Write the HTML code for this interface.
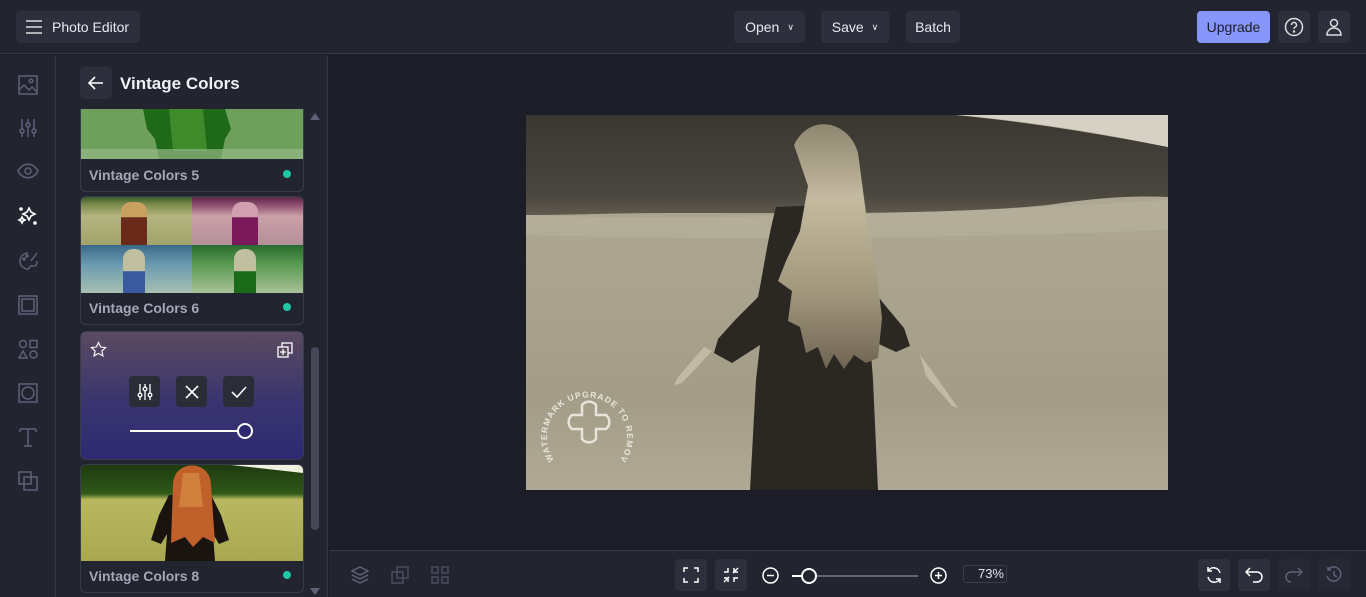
<!DOCTYPE html>
<html><head><style>
*{box-sizing:border-box;margin:0;padding:0}
body{width:1366px;height:597px;overflow:hidden;background:#1c1d27;font-family:"Liberation Sans",sans-serif;color:#e6e7ee;position:relative}
.top{position:absolute;left:0;top:0;width:1366px;height:54px;background:#22242f;border-bottom:1px solid #343747}
.btn{position:absolute;background:#2d303c;border-radius:4px;font-size:14px;color:#e8e9f0;display:flex;align-items:center;justify-content:center}
.rail{position:absolute;left:0;top:55px;width:56px;height:542px;background:#22242f;border-right:1px solid #343747}
.panel{position:absolute;left:56px;top:55px;width:272px;height:542px;background:#22242f;border-right:1px solid #343747}
.card{position:absolute;left:24px;width:224px;border:1px solid #393c4b;border-radius:6px;overflow:hidden;background:#22242f}
.card .lbl{position:absolute;left:8px;bottom:8px;font-size:14px;font-weight:bold;color:#a5a7b8}
.card .dot{position:absolute;right:12px;bottom:13px;width:8px;height:8px;border-radius:50%;background:#1fc7a6}
.bottom{position:absolute;left:329px;top:550px;width:1037px;height:47px;background:#22242f;border-top:1px solid #343747}
.ic{position:absolute;stroke:#5e6178;fill:none;stroke-width:1.5}
</style></head><body>
<div class="top">
 <div class="btn" style="left:16px;top:11px;width:124px;height:32px;justify-content:flex-start;padding-left:10px">
  <svg width="16" height="14" viewBox="0 0 16 14" stroke="#ddd" stroke-width="1.6"><path d="M0 1h16M0 7h16M0 13h16"/></svg>
  <span style="margin-left:10px">Photo Editor</span></div>
 <div class="btn" style="left:734px;top:11px;width:71px;height:32px">Open <span style="font-size:9px;margin-left:8px">&#x2228;</span></div>
 <div class="btn" style="left:821px;top:11px;width:68px;height:32px">Save <span style="font-size:9px;margin-left:8px">&#x2228;</span></div>
 <div class="btn" style="left:906px;top:11px;width:54px;height:32px">Batch</div>
 <div class="btn" style="left:1197px;top:11px;width:73px;height:32px;background:#8796fa;color:#1b1d2a">Upgrade</div>
 <div class="btn" style="left:1278px;top:11px;width:32px;height:32px"><svg width="20" height="20" viewBox="0 0 20 20" fill="none" stroke="#ddd" stroke-width="1.5"><circle cx="10" cy="10" r="8.5"/><path d="M7.5 8a2.5 2.5 0 1 1 3.3 2.3c-.6.3-.8.7-.8 1.4"/><circle cx="10" cy="14.5" r=".5"/></svg></div>
 <div class="btn" style="left:1318px;top:11px;width:32px;height:32px"><svg width="18" height="20" viewBox="0 0 18 20" fill="none" stroke="#ddd" stroke-width="1.5"><circle cx="9" cy="6" r="3.5"/><path d="M2 18c0-4 3-7 7-7s7 3 7 7z"/></svg></div>
</div>
<div class="rail">
 <svg class="ic" style="left:18px;top:20px" width="20" height="20" viewBox="0 0 20 20"><rect x="1" y="1" width="18" height="18"/><path d="M1 15l5-5 5 5 3-3 5 5"/><circle cx="13" cy="6" r="1.8"/></svg>
 <svg class="ic" style="left:18px;top:63px" width="20" height="20" viewBox="0 0 20 20"><path d="M4 1v18M10 1v18M16 1v18"/><circle cx="4" cy="13" r="2" fill="#22242f"/><circle cx="10" cy="7" r="2" fill="#22242f"/><circle cx="16" cy="13" r="2" fill="#22242f"/></svg>
 <svg class="ic" style="left:17px;top:108px" width="22" height="16" viewBox="0 0 22 16"><path d="M1 8c5-9 15-9 20 0c-5 9-15 9-20 0z"/><circle cx="11" cy="8" r="3"/></svg>
 <svg style="position:absolute;left:17px;top:151px" width="22" height="22" viewBox="0 0 22 22" fill="none" stroke="#fff" stroke-width="1.6"><path d="M12 2l2 4 4 2-4 2-2 4-2-4-4-2 4-2z"/><path d="M5 11l1 2 2 1-2 1-1 2-1-2-2-1 2-1z"/><circle cx="18" cy="17" r="1" fill="#fff"/><circle cx="4" cy="3" r="1" fill="#fff"/></svg>
 <svg class="ic" style="left:18px;top:196px" width="21" height="21" viewBox="0 0 21 21"><path d="M10 2a8 8 0 1 0 0 16c2 0 1-3 3-3h3c2 0 3-2 3-5"/><circle cx="6" cy="8" r="1"/><circle cx="9" cy="5" r="1"/><path d="M19 2l-6 8"/></svg>
 <svg class="ic" style="left:18px;top:240px" width="20" height="20" viewBox="0 0 20 20"><rect x="1" y="1" width="18" height="18"/><rect x="4" y="4" width="12" height="12"/></svg>
 <svg class="ic" style="left:18px;top:284px" width="20" height="20" viewBox="0 0 20 20"><circle cx="5" cy="5" r="3.5"/><rect x="12" y="1.5" width="7" height="7"/><path d="M5 12l4 7H1z"/><circle cx="15.5" cy="15.5" r="3.5"/></svg>
 <svg class="ic" style="left:18px;top:328px" width="20" height="20" viewBox="0 0 20 20"><rect x="1" y="1" width="18" height="18"/><circle cx="10" cy="10" r="6"/></svg>
 <svg class="ic" style="left:18px;top:372px" width="20" height="20" viewBox="0 0 20 20"><path d="M2 2h16M10 2v17M6 19h8M2 2v3M18 2v3"/></svg>
 <svg class="ic" style="left:18px;top:416px" width="20" height="20" viewBox="0 0 20 20"><rect x="1" y="1" width="12" height="12"/><rect x="6" y="6" width="13" height="13"/></svg>
</div>
<div class="panel">
 <div class="btn" style="left:24px;top:12px;width:32px;height:32px"><svg width="16" height="14" viewBox="0 0 16 14" fill="none" stroke="#fff" stroke-width="1.6"><path d="M15 7H2M7 1L1 7l6 6"/></svg></div>
 <div style="position:absolute;left:64px;top:19px;font-size:17px;font-weight:bold;color:#f0f1f6">Vintage Colors</div>
 <div class="card" style="top:54px;height:83px;border-top:none;border-radius:0 0 6px 6px">
  <svg width="222" height="50" viewBox="0 0 222 50"><rect width="222" height="50" fill="#6ea05c"/><path d="M62 0h82l6 20-6 10-4 20H78l-4-20-8-10z" fill="#1f6a18"/><path d="M88 0h34l4 42H92z" fill="#3f8a2a"/><path d="M0 40h222v10H0z" fill="#94b888" opacity=".7"/></svg>
  <div class="lbl">Vintage Colors 5</div><div class="dot"></div></div>
 <div class="card" style="top:141px;height:129px"><div style="height:96px;display:grid;grid-template-columns:1fr 1fr">
  <div style="background:linear-gradient(#3a5a2a 0%,#7a8a4a 15%,#b4b480 40%,#a2a26a);position:relative"><div style="position:absolute;left:40px;top:5px;width:26px;height:43px;background:linear-gradient(#c8a060 35%,#6a2a1a 36%);border-radius:10px 10px 0 0"></div></div>
  <div style="background:linear-gradient(#5a2a4a 0%,#8a4a6a 15%,#caa0a8 40%,#b49098);position:relative"><div style="position:absolute;left:40px;top:5px;width:26px;height:43px;background:linear-gradient(#d0a0b0 35%,#7a1a5a 36%);border-radius:10px 10px 0 0"></div></div>
  <div style="background:linear-gradient(#3a6a8a,#6a9ab0 40%,#a8c0b0);position:relative"><div style="position:absolute;left:42px;top:4px;width:22px;height:44px;background:linear-gradient(#c0c0a0 50%,#3a5aa0 51%);border-radius:10px 10px 0 0"></div></div>
  <div style="background:linear-gradient(#2a6a30,#5a9a50 40%,#a8c098);position:relative"><div style="position:absolute;left:42px;top:4px;width:22px;height:44px;background:linear-gradient(#c0c0a0 50%,#1a6a1a 51%);border-radius:10px 10px 0 0"></div></div></div>
  <div class="lbl">Vintage Colors 6</div><div class="dot"></div></div>
 <div class="card" style="top:276px;height:129px;background:linear-gradient(#5a4a60,#3a3570 55%,#2d2a72)">
  <svg style="position:absolute;left:9px;top:9px" width="17" height="17" viewBox="0 0 24 24" fill="none" stroke="#fff" stroke-width="1.6"><path d="M12 2l3 6.5 7 .8-5.2 4.8 1.5 7L12 17.5 5.7 21l1.5-7L2 9.3l7-.8z"/></svg>
  <svg style="position:absolute;left:196px;top:10px" width="16" height="16" viewBox="0 0 16 16" fill="none" stroke="#fff" stroke-width="1.3"><rect x="5" y="1" width="10" height="10"/><rect x="1" y="5" width="10" height="10" fill="#54475e"/><path d="M6 7v6M3 10h6"/></svg>
  <div class="btn" style="left:48px;top:44px;width:31px;height:31px;background:#2a2c38"><svg width="16" height="18" viewBox="0 0 16 18" fill="none" stroke="#fff" stroke-width="1.3"><path d="M3 1v16M8 1v16M13 1v16"/><circle cx="3" cy="12" r="1.8" fill="#2a2c38"/><circle cx="8" cy="6" r="1.8" fill="#2a2c38"/><circle cx="13" cy="12" r="1.8" fill="#2a2c38"/></svg></div>
  <div class="btn" style="left:95px;top:44px;width:31px;height:31px;background:#2a2c38"><svg width="14" height="14" viewBox="0 0 14 14" stroke="#fff" stroke-width="1.6"><path d="M1 1l12 12M13 1L1 13"/></svg></div>
  <div class="btn" style="left:142px;top:44px;width:31px;height:31px;background:#2a2c38"><svg width="16" height="12" viewBox="0 0 16 12" fill="none" stroke="#fff" stroke-width="1.6"><path d="M1 6l5 5L15 1"/></svg></div>
  <div style="position:absolute;left:49px;top:98px;width:110px;height:2px;background:#fff"></div>
  <div style="position:absolute;left:156px;top:91px;width:16px;height:16px;border:2px solid #fff;border-radius:50%;background:#2d2a72"></div>
 </div>
 <div class="card" style="top:409px;height:129px">
  <svg width="222" height="96" viewBox="0 0 222 96"><defs><linearGradient id="tg" x1="0" y1="0" x2="0" y2="1"><stop offset="0" stop-color="#1e3a10"/><stop offset=".3" stop-color="#2f5a18"/><stop offset=".36" stop-color="#b8b860"/><stop offset="1" stop-color="#a8a850"/></linearGradient></defs>
  <rect width="222" height="96" fill="url(#tg)"/><path d="M150 0h72v8z" fill="#f0f0e0"/>
  <path d="M88 30l-10 20-8 25 10 4 6-10-2 27h50l-2-27 6 10 10-4-8-25-10-20z" fill="#1a1410"/>
  <path d="M92 20c0-26 38-26 38 0l4 58-12-6-10 10-8-10-14 6z" fill="#c0602a"/><path d="M102 8h16l4 34h-24z" fill="#e0a050" opacity=".5"/>
  </svg>
  <div class="lbl">Vintage Colors 8</div><div class="dot"></div></div>
 <div style="position:absolute;left:254px;top:58px;width:0;height:0;border:5px solid transparent;border-bottom:7px solid #5e6178;border-top:none"></div>
 <div style="position:absolute;left:255px;top:292px;width:8px;height:183px;border-radius:4px;background:#454858"></div>
 <div style="position:absolute;left:254px;top:533px;width:0;height:0;border:5px solid transparent;border-top:7px solid #5e6178;border-bottom:none"></div>
</div>
<svg style="position:absolute;left:526px;top:115px" width="642" height="375" viewBox="0 0 642 375">
 <defs>
  <linearGradient id="fg" x1="0" y1="0" x2="0" y2="1"><stop offset="0" stop-color="#b0aa96"/><stop offset=".5" stop-color="#a9a28d"/><stop offset=".75" stop-color="#a39c87"/><stop offset="1" stop-color="#b0a995"/></linearGradient>
  <linearGradient id="hair" x1="0" y1="0" x2="0" y2="1"><stop offset="0" stop-color="#8f8670"/><stop offset=".3" stop-color="#c4baa0"/><stop offset=".7" stop-color="#a0967c"/><stop offset="1" stop-color="#6e6452"/></linearGradient>
  <linearGradient id="fr" x1="0" y1="0" x2="0" y2="1"><stop offset="0" stop-color="#3a3731"/><stop offset=".8" stop-color="#4a473f"/><stop offset="1" stop-color="#5e5a4f"/></linearGradient>
 </defs>
 <rect width="642" height="375" fill="url(#fg)"/>
 <path d="M0 0h430c80 8 150 20 212 32v50c-40-2-80 2-120 8-100 10-250 8-380 8C90 98 40 100 0 100z" fill="url(#fr)"/>
 <path d="M430 0h212v32C560 15 490 5 430 0z" fill="#d6d1c4"/>
 <path d="M0 100c150 6 400 0 642-15v30C400 125 150 125 0 120z" fill="#b8b29f" opacity=".6"/>
 <!-- dress -->
 <path d="M250 92c-8 30-12 60-18 90l-22 22-18 20-4 14 18 10 28-18-4 35-6 110h128l-5-110-3-40 26 12 14-6-6-18-20-24-20-25-5-40-10-35z" fill="#2b2824"/>
 <!-- arms -->
 <path d="M186 236l-30 32-8 2 4-8 26-30z" fill="#c4baa4"/>
 <path d="M394 240l15 20 23 33-6-2-26-30z" fill="#c4baa4"/>
 <!-- hair -->
 <path d="M268 30c15-32 55-25 64 8l8 60 10 55 6 50-4 40-12 5-12-8-10 14-10-15-8 15-8-22-12 6-6-26-12-6 4-30-14-10 8-20 14-30 8-45z" fill="url(#hair)"/>
 <!-- watermark -->
 <path d="M56 290a9 9 0 0 1 14 0v10h10a9 9 0 0 1 0 14H70v10a9 9 0 0 1-14 0v-10H46a9 9 0 0 1 0-14h10z" fill="none" stroke="#eeebe4" stroke-width="2.5" opacity=".9"/>
 <path id="wm" d="M28 345A40 40 0 1 1 94 345" fill="none"/>
 <text font-size="8.5" font-weight="bold" fill="#eeebe4" font-family="Liberation Sans" letter-spacing="1" opacity=".9"><textPath href="#wm">WATERMARK UPGRADE TO REMOVE</textPath></text>
</svg>
<div class="bottom">
 <svg class="ic" style="left:22px;top:15px" width="18" height="18" viewBox="0 0 18 18"><path d="M9 1l8 4-8 4-8-4zM1 9l8 4 8-4M1 13l8 4 8-4"/></svg>
 <svg class="ic" style="left:62px;top:15px;stroke:#4a4d60" width="18" height="18" viewBox="0 0 18 18"><rect x="1" y="6" width="11" height="11"/><rect x="6" y="1" width="11" height="11"/></svg>
 <svg class="ic" style="left:102px;top:15px;stroke:#4a4d60" width="18" height="18" viewBox="0 0 18 18"><rect x="1" y="1" width="6" height="6"/><rect x="11" y="1" width="6" height="6"/><rect x="1" y="11" width="6" height="6"/><rect x="11" y="11" width="6" height="6"/></svg>
 <div class="btn" style="left:346px;top:8px;width:32px;height:32px"><svg width="16" height="16" viewBox="0 0 16 16" fill="none" stroke="#fff" stroke-width="1.5"><path d="M1 5V1h4M11 1h4v4M15 11v4h-4M5 15H1v-4"/></svg></div>
 <div class="btn" style="left:386px;top:8px;width:32px;height:32px"><svg width="16" height="16" viewBox="0 0 16 16" fill="none" stroke="#fff" stroke-width="1.5"><path d="M1 5h4V1M11 1v4h4M15 11h-4v4M5 15v-4H1M10 6l5-5M6 10l-5 5"/></svg></div>
 <svg style="position:absolute;left:433px;top:16px" width="17" height="17" viewBox="0 0 17 17" fill="none" stroke="#fff" stroke-width="1.5"><circle cx="8.5" cy="8.5" r="7.5"/><path d="M5 8.5h7"/></svg>
 <div style="position:absolute;left:465px;top:24px;width:124px;height:2px;background:#5e6178"></div>
 <div style="position:absolute;left:463px;top:24px;width:10px;height:2px;background:#fff"></div>
 <div style="position:absolute;left:472px;top:17px;width:16px;height:16px;border:2px solid #fff;border-radius:50%;background:#22242f"></div>
 <svg style="position:absolute;left:601px;top:16px" width="17" height="17" viewBox="0 0 17 17" fill="none" stroke="#fff" stroke-width="1.5"><circle cx="8.5" cy="8.5" r="7.5"/><path d="M5 8.5h7M8.5 5v7"/></svg>
 <div style="position:absolute;left:634px;top:14px;width:44px;height:18px;border:1px solid #3a3d4c;border-radius:3px;font-size:13px;text-align:right;padding-right:2px;line-height:16px">73%</div>
 <div class="btn" style="left:869px;top:8px;width:32px;height:32px"><svg width="18" height="18" viewBox="0 0 18 18" fill="none" stroke="#fff" stroke-width="1.5"><path d="M15 7A6.5 6.5 0 0 0 3 5M3 11a6.5 6.5 0 0 0 12 2M3 1v4h4M15 17v-4h-4"/></svg></div>
 <div class="btn" style="left:909px;top:8px;width:32px;height:32px"><svg width="18" height="16" viewBox="0 0 18 16" fill="none" stroke="#fff" stroke-width="1.5"><path d="M5 1L1 5l4 4M1 5h11a5 5 0 0 1 0 10H8"/></svg></div>
 <div class="btn" style="left:949px;top:8px;width:32px;height:32px;background:#262833"><svg width="18" height="16" viewBox="0 0 18 16" fill="none" stroke="#5e6178" stroke-width="1.5"><path d="M13 1l4 4-4 4M17 5H6a5 5 0 0 0 0 10"/></svg></div>
 <div class="btn" style="left:989px;top:8px;width:32px;height:32px;background:#262833"><svg width="18" height="18" viewBox="0 0 18 18" fill="none" stroke="#5e6178" stroke-width="1.5"><path d="M3 4a7 7 0 1 1-1 6M3 1v3h3M9 5v4l3 2"/></svg></div>
</div>
</body></html>
